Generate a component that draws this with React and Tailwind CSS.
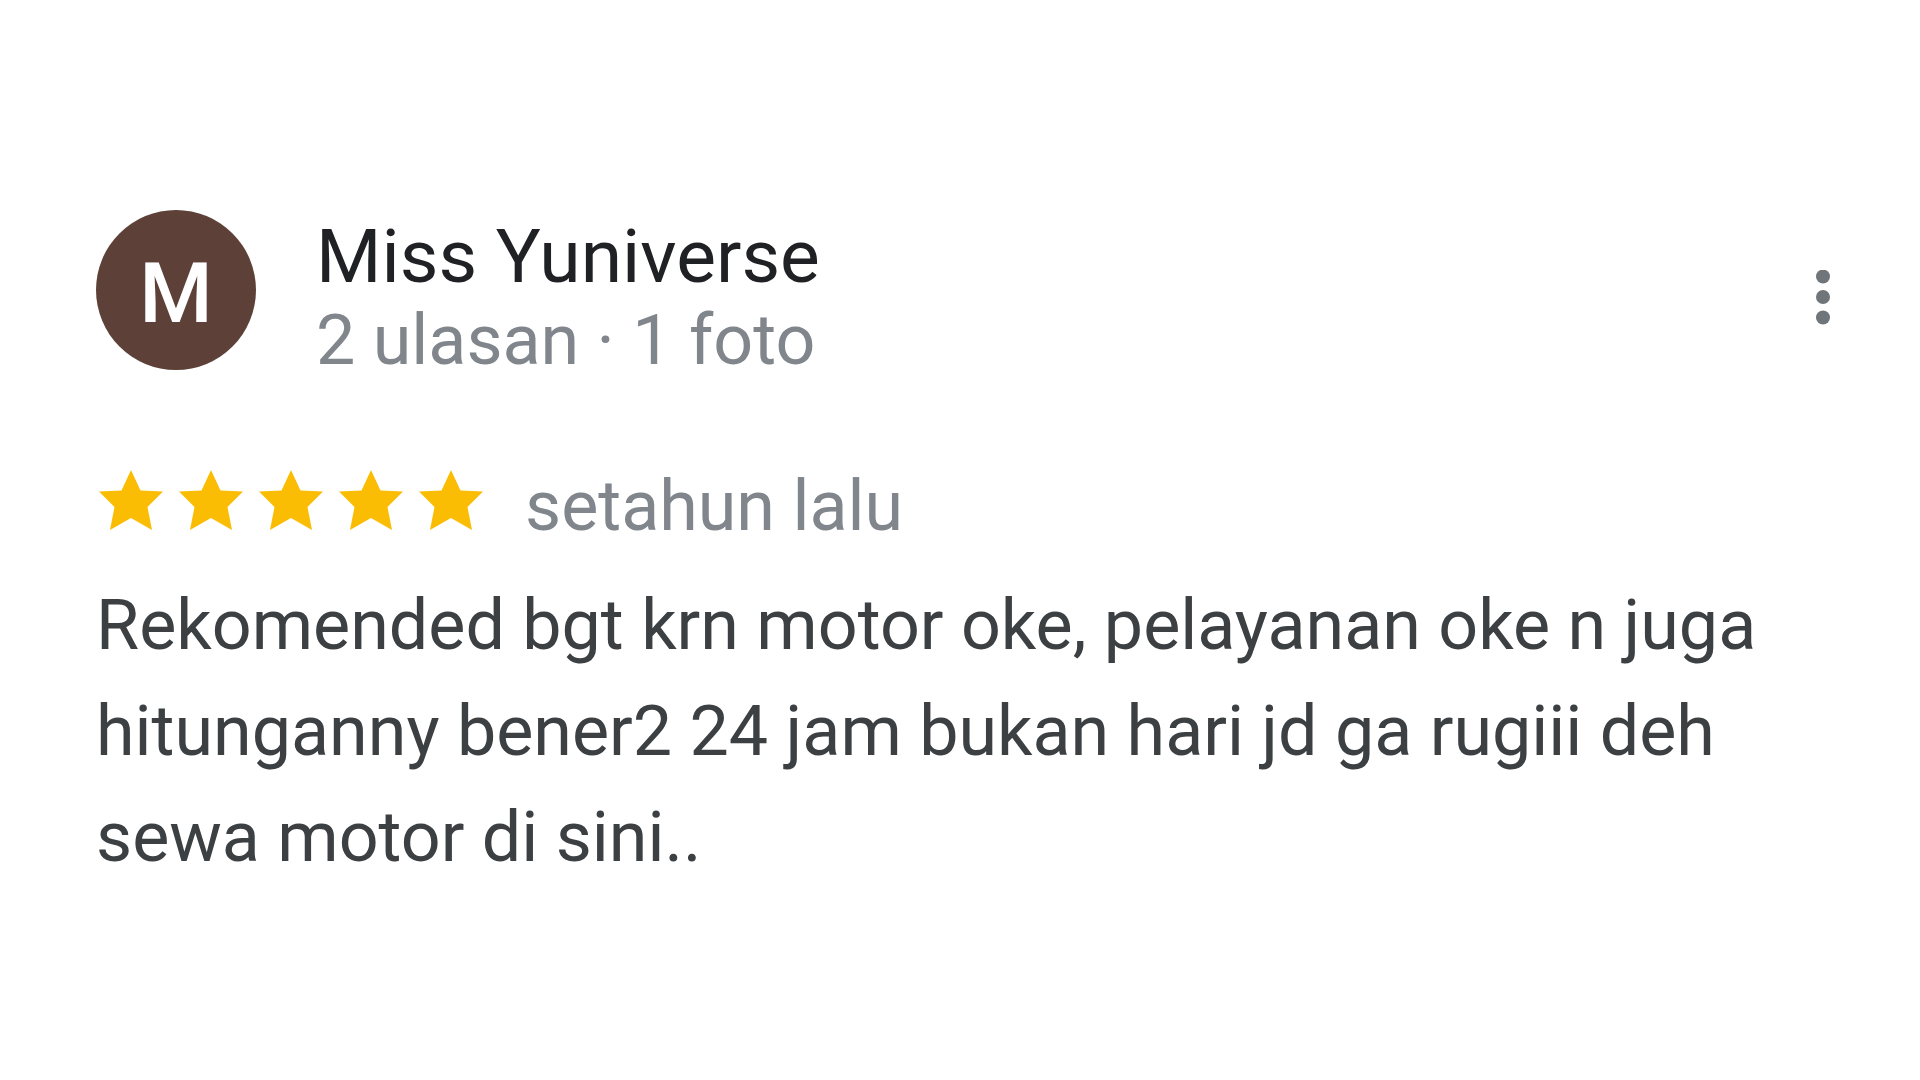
const review = {
  name: 'Miss Yuniverse',
  stats: '2 ulasan · 1 foto',
  rating: 5,
  date: 'setahun lalu',
  text: 'Rekomended bgt krn motor oke, pelayanan oke n juga hitunganny bener2 24 jam bukan hari jd ga rugiii deh sewa motor di sini..',
}

function Star() {
  return (
    <svg viewBox="0 0 64 60" className="w-16 h-[60px] fill-[#fbbc04]" aria-hidden="true">
      <path d="M32 0L41.5 20.5L64 21.5L48.5 37L53 60L32 48L11 60L15.5 37L0 21.5L22.5 20.5Z" />
    </svg>
  )
}

export default function App() {
  return (
    <main className="min-h-screen bg-white pt-[210px] pl-24 pr-16 font-['Roboto',sans-serif]">
      <article>
        <header className="flex items-start">
          <div className="flex size-40 shrink-0 items-center justify-center rounded-full bg-[#5d4037] pt-2 text-[84px] leading-none font-medium text-white">
            M
          </div>
          <div className="ml-[60px] grow pt-1">
            <h2 className="text-[75px] leading-[84px] text-[#202124]">{review.name}</h2>
            <p className="text-[70px] leading-[84px] text-[#80868b]">{review.stats}</p>
          </div>
          <button type="button" aria-label="Opsi lainnya" className="mt-14 flex w-16 justify-center py-1">
            <svg viewBox="0 0 16 56" className="h-14 w-4 fill-[#70757a]" aria-hidden="true">
              <circle cx="7" cy="6.5" r="7" />
              <circle cx="7" cy="27" r="7" />
              <circle cx="7" cy="47.5" r="7" />
            </svg>
          </button>
        </header>

        <div className="mt-[82px] flex items-center">
          <div className="flex gap-4 pl-[3px] pb-3" role="img" aria-label="5 bintang">
            {Array.from({ length: review.rating }, (_, i) => <Star key={i} />)}
          </div>
          <span className="ml-[42px] text-[70px] leading-[84px] text-[#80868b]">{review.date}</span>
        </div>

        <p className="mt-6 text-[70px] leading-[106px] text-[#3c4043]">{review.text}</p>
      </article>
    </main>
  )
}
